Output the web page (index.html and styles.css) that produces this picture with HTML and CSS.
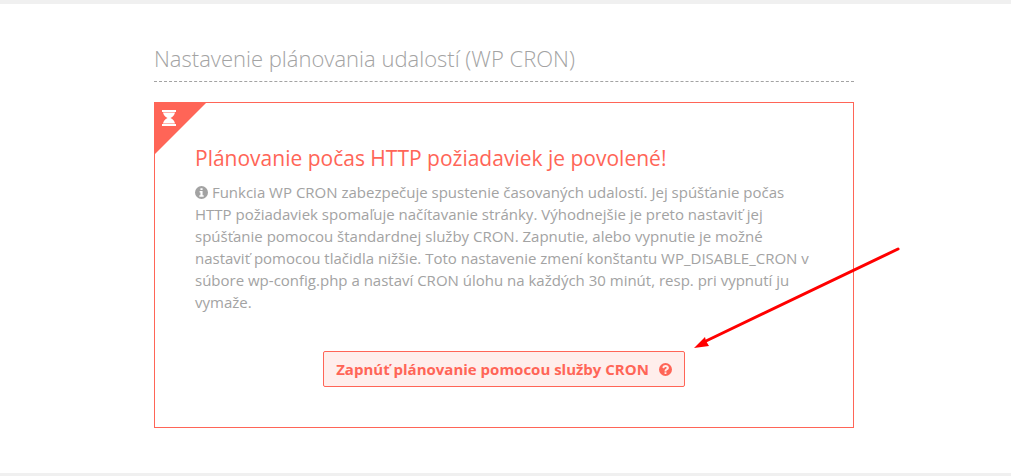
FILE: index.html
```html
<!DOCTYPE html>
<html lang="sk">
<head>
<meta charset="utf-8">
<title>Nastavenie plánovania udalostí</title>
<link rel="stylesheet" href="styles.css">
</head>
<body>
<main class="page">
  <section class="settings">
    <h2 class="heading">Nastavenie plánovania udalostí (WP CRON)</h2>
    <div class="card">
      <div class="corner">
        <svg class="hourglass" viewBox="0 0 14 16" aria-hidden="true"><path d="M0 0h14v2H0zM0 14h14v2H0zM1 2.500h12C12.500 5 11 7 8.500 8C11 9 12.500 11 13 13.500H1C1.500 11 3 9 5.500 8C3 7 1.500 5 1 2.500z"/></svg>
      </div>
      <h3 class="title">Plánovanie počas HTTP požiadaviek je povolené!</h3>
      <p class="text"><svg class="icon" viewBox="0 0 1536 1536" aria-hidden="true"><path fill-rule="evenodd" d="M768 0a768 768 0 1 0 0 1536a768 768 0 0 0 0-1536zM640 256h256v224H640zM544 576h352v512h128v192H512v-192h128V768h-96z"/></svg> Funkcia WP CRON zabezpečuje spustenie časovaných udalostí. Jej spúšťanie počas HTTP požiadaviek spomaľuje načítavanie stránky. Výhodnejšie je preto nastaviť jej spúšťanie pomocou štandardnej služby CRON. Zapnutie, alebo vypnutie je možné nastaviť pomocou tlačidla nižšie. Toto nastavenie zmení konštantu WP_DISABLE_CRON v súbore wp-config.php a nastaví CRON úlohu na každých 30 minút, resp. pri vypnutí ju vymaže.</p>
      <div class="actions">
        <button class="button" type="button">Zapnúť plánovanie pomocou služby CRON <svg class="icon" viewBox="0 0 1536 1536" aria-hidden="true"><path fill-rule="evenodd" d="M768 0a768 768 0 1 0 0 1536a768 768 0 0 0 0-1536zM656 1088h224v208H656zM390 520C470 340 590 240 790 240c200 0 380 140 380 330 0 150-90 215-180 268-60 34-110 70-110 162H656c0-180 70-260 170-318 65-37 90-60 90-112 0-60-70-100-132-100-85 0-130 50-202 190z"/></svg></button>
      </div>
    </div>
  </section>
  <svg class="pointer" viewBox="0 0 206 104" aria-hidden="true"><path d="M204 2L12 94" stroke="#f00" stroke-width="3" stroke-linecap="round"/><path d="M0 101L11 90L12 94L15 99z" fill="#f00"/></svg>
</main>
</body>
</html>
```
FILE: styles.css
```css
* { box-sizing: border-box; }
body { margin: 0; background: #fff; color: #a3a3a3; font-family: "Open Sans", sans-serif; }
.page { position: relative; border-top: 4px solid #f0f0f0; border-bottom: 3px solid #f0f0f0; padding: 40px 17px 45px 14px; }
.settings { max-width: 700px; margin: 0 auto; }
.heading { margin: 0 0 20px; padding-bottom: 8px; border-bottom: 1px dashed #a3a3a3; font-size: 22px; line-height: 29px; font-weight: 300; }
.card { position: relative; border: 1px solid #ff6557; padding: 40px; }
.corner { position: absolute; top: 0; left: 0; width: 51px; height: 51px; background: #ff6557; clip-path: polygon(0 0, 100% 0, 0 100%); }
.hourglass { position: absolute; left: 7px; top: 7px; width: 14px; height: 16px; fill: #fff; }
.title { margin: 0 0 8px; font-size: 21px; line-height: 30px; font-weight: 400; color: #ff6557; }
.text { margin: 0; font-size: 15px; line-height: 22px; }
.icon { width: 13px; height: 13px; fill: currentColor; vertical-align: -1px; }
.actions { margin-top: 38px; text-align: center; }
.button { height: 36px; padding: 0 12px; border: 1px solid #ff6557; border-radius: 2px; background: #ffeeec; color: #ff6557; font: 700 15px/22px "Open Sans", sans-serif; }
.button .icon { margin-left: 6px; }
.pointer { position: absolute; left: calc(50% + 188px); top: 243px; width: 206px; height: 104px; fill: none; }
```
